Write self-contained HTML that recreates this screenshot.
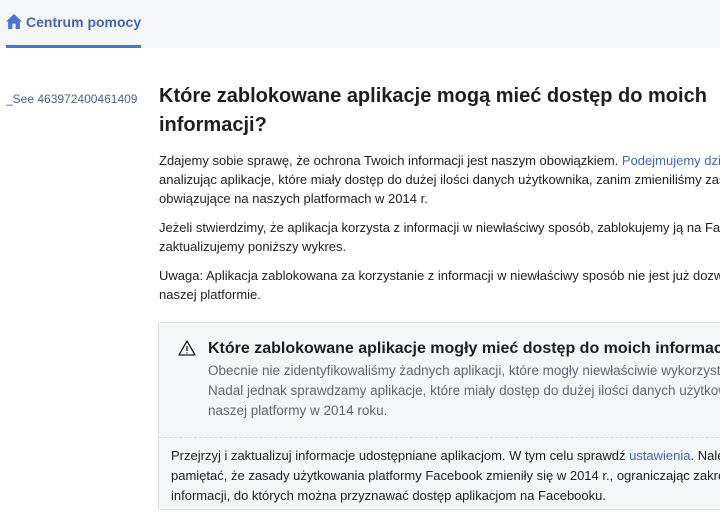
<!DOCTYPE html>
<html><head><meta charset="utf-8"><style>
html,body{margin:0;padding:0;width:720px;height:522px;overflow:hidden;background:#fff;font-family:"Liberation Sans",Arial,sans-serif;color:#1c1e21}
.top{position:absolute;left:0;top:0;width:720px;height:48px;background:#f5f6f7}
.tab{position:absolute;left:6px;top:14px;font-size:14px;font-weight:bold;color:#4267b2;white-space:nowrap}
.tab svg{vertical-align:-2px;margin-right:4px}
.ul{position:absolute;left:6px;top:45px;width:135px;height:3px;background:#4a76d0}
.side{position:absolute;left:6px;top:92px;font-size:12px;color:#4b5e8c}
.main{position:absolute;left:159px;top:82px;width:561px;overflow:hidden}
h1{margin:0;font-size:20px;line-height:29px;font-weight:bold;white-space:nowrap}
p{margin:0 0 10px;font-size:13px;line-height:19px;white-space:nowrap;color:#1c1e21}
a{color:#4267b2;text-decoration:none}
.box{position:absolute;left:158px;top:322px;width:562px;height:186px;border:1px solid #dadde1;border-right:none;background:#f5f6f7;overflow:hidden}
.bh{position:absolute;left:0;top:0;width:600px;height:114px;border-bottom:1px dashed #dadde1}
.bh h2{position:absolute;left:49px;top:17px;margin:0;font-size:16px;font-weight:bold;white-space:nowrap}
.bh .tri{position:absolute;left:19px;top:17px}
.bh .t{position:absolute;left:49px;top:38px;font-size:13.5px;line-height:20px;color:#606770;white-space:nowrap}
.bl{position:absolute;left:12px;top:123px;font-size:13px;line-height:20px;white-space:nowrap;color:#1c1e21}
</style></head><body>
<div class="top"><div class="tab"><svg width="16" height="15" viewBox="0 0 15 14"><path d="M7.5 0L0 7h2v7h4V9h3v5h4V7h2z" fill="#4a76d0"/></svg>Centrum pomocy</div><div class="ul"></div></div>
<div class="side">_See 463972400461409</div>
<div class="main">
<h1>Które zablokowane aplikacje mogą mieć dostęp do moich<br>informacji?</h1>
<div style="height:11px"></div>
<p>Zdajemy sobie sprawę, że ochrona Twoich informacji jest naszym obowiązkiem. <a>Podejmujemy działania</a><br>analizując aplikacje, które miały dostęp do dużej ilości danych użytkownika, zanim zmieniliśmy zasady<br>obwiązujące na naszych platformach w 2014 r.</p>
<p>Jeżeli stwierdzimy, że aplikacja korzysta z informacji w niewłaściwy sposób, zablokujemy ją na Facebooku i<br>zaktualizujemy poniższy wykres.</p>
<p>Uwaga: Aplikacja zablokowana za korzystanie z informacji w niewłaściwy sposób nie jest już dozwolona na<br>naszej platformie.</p>
</div>
<div class="box">
<div class="bh"><svg class="tri" width="18" height="16" viewBox="0 0 18 16"><path d="M9 1L1 15h16z" fill="none" stroke="#1c1e21" stroke-width="1.3" stroke-linejoin="round"/><path d="M9 6v5M9 12.5v1" stroke="#1c1e21" stroke-width="1.3"/></svg>
<h2>Które zablokowane aplikacje mogły mieć dostęp do moich informacji?</h2>
<div class="t">Obecnie nie zidentyfikowaliśmy żadnych aplikacji, które mogły niewłaściwie wykorzystać<br>Nadal jednak sprawdzamy aplikacje, które miały dostęp do dużej ilości danych użytkownika<br>naszej platformy w 2014 roku.</div></div>
<div class="bl">Przejrzyj i zaktualizuj informacje udostępniane aplikacjom. W tym celu sprawdź <a>ustawienia</a>. Należy<br>pamiętać, że zasady użytkowania platformy Facebook zmieniły się w 2014 r., ograniczając zakres<br>informacji, do których można przyznawać dostęp aplikacjom na Facebooku.</div>
</div>
</body></html>
